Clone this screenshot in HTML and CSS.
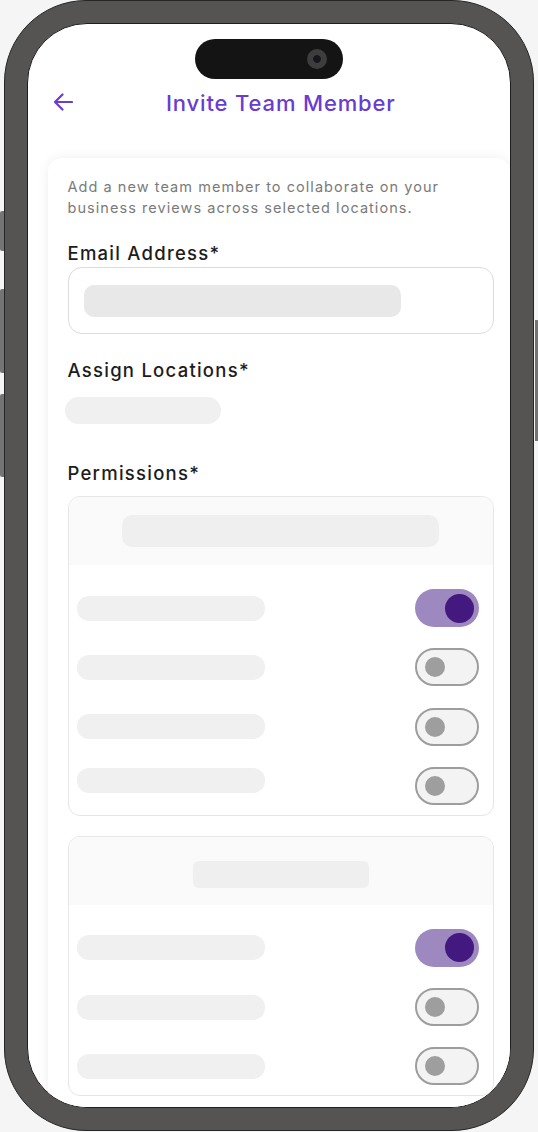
FILE: index.html
```html
<!DOCTYPE html>
<html lang="en">
<head>
<meta charset="utf-8">
<title>Invite Team Member</title>
<link rel="stylesheet" href="styles.css">
</head>
<body>
<div class="phone">
  <span class="side side-l1"></span>
  <span class="side side-l2"></span>
  <span class="side side-l3"></span>
  <span class="side side-r1"></span>
  <div class="screen">
    <div class="island"><span class="cam"></span></div>
    <header class="topbar">
      <svg class="back" viewBox="0 0 20 18" width="20" height="18" aria-hidden="true">
        <path d="M19 9H2M9.5 1.5L2 9l7.5 7.5" fill="none" stroke="#6a3cd0" stroke-width="2.2" stroke-linecap="round" stroke-linejoin="round"/>
      </svg>
      <h1 class="title">Invite Team Member</h1>
    </header>
    <main class="card">
      <p class="desc">Add a new team member to collaborate on your<br>business reviews across selected locations.</p>
      <div class="label label-email">Email Address*</div>
      <div class="input"><span class="sk sk-input"></span></div>
      <div class="label label-assign">Assign Locations*</div>
      <span class="sk sk-pill"></span>
      <div class="label label-perm">Permissions*</div>

      <section class="group">
        <div class="group-head"><span class="sk sk-head"></span></div>
        <div class="rows">
          <div class="row"><span class="sk sk-row"></span><span class="toggle on"><span class="knob"></span></span></div>
          <div class="row"><span class="sk sk-row"></span><span class="toggle"><span class="knob"></span></span></div>
          <div class="row"><span class="sk sk-row"></span><span class="toggle"><span class="knob"></span></span></div>
          <div class="row row-lift"><span class="sk sk-row"></span><span class="toggle"><span class="knob"></span></span></div>
        </div>
      </section>

      <section class="group">
        <div class="group-head"><span class="sk sk-head sk-head-short"></span></div>
        <div class="rows">
          <div class="row"><span class="sk sk-row"></span><span class="toggle on"><span class="knob"></span></span></div>
          <div class="row"><span class="sk sk-row"></span><span class="toggle"><span class="knob"></span></span></div>
          <div class="row"><span class="sk sk-row"></span><span class="toggle"><span class="knob"></span></span></div>
        </div>
      </section>
    </main>
  </div>
</div>
</body>
</html>
```

FILE: styles.css
```css
html, body {
  margin: 0;
  padding: 0;
}
body {
  background: #f5f5f5;
  font-family: "Inter", "Noto Sans", sans-serif;
  width: 538px;
  height: 1132px;
  overflow: hidden;
}
.phone {
  position: relative;
  box-sizing: border-box;
  margin-left: 4px;
  width: 530px;
  height: 1131px;
  padding: 22px;
  background: #555453;
  border: 1.5px solid #262626;
  border-radius: 82px;
}
.side {
  position: absolute;
  width: 4px;
  background: #747474;
}
.side-l1 { left: -5.5px; top: 210px; height: 40px; border-radius: 2px 0 0 2px; }
.side-l2 { left: -5.5px; top: 288px; height: 84px; border-radius: 2px 0 0 2px; }
.side-l3 { left: -5.5px; top: 393px; height: 83px; border-radius: 2px 0 0 2px; }
.side-r1 { right: -5.5px; top: 319px; height: 121px; border-radius: 0 2px 2px 0; }

.screen {
  box-sizing: border-box;
  width: 100%;
  height: 100%;
  background: #ffffff;
  border: 1.5px solid #1f1f1f;
  border-radius: 60px;
  overflow: hidden;
  display: flex;
  flex-direction: column;
}
.island {
  flex: none;
  align-self: center;
  margin-top: 15px;
  width: 148px;
  height: 40px;
  border-radius: 20px;
  background: #141414;
  display: flex;
  align-items: center;
  justify-content: flex-end;
  box-sizing: border-box;
  padding-right: 16px;
}
.cam {
  width: 20px;
  height: 20px;
  border-radius: 50%;
  background: radial-gradient(circle, #16161c 0 3.5px, #3d3d3d 4.2px);
}
.topbar {
  flex: none;
  height: 47px;
  display: flex;
  align-items: center;
  padding-left: 25px;
  gap: 93px;
}
.back {
  display: block;
  flex: none;
  margin-top: -1px;
}
.title {
  margin: 0;
  font-size: 22px;
  font-weight: 500;
  color: #6a3cd0;
  letter-spacing: 0.85px;
}
.card {
  flex: none;
  box-sizing: border-box;
  margin-top: 32px;
  margin-left: 19.5px;
  width: 462px;
  padding: 18px 20px 0 20px;
  background: #ffffff;
  border-radius: 14px;
  box-shadow: 0 0 12px rgba(0, 0, 0, 0.07);
  display: flex;
  flex-direction: column;
  align-items: flex-start;
  min-height: 1100px;
}
.desc {
  margin: 0;
  font-size: 14.5px;
  line-height: 21px;
  color: #7a7a7a;
  letter-spacing: 1.05px;
  white-space: nowrap;
}
.label {
  font-size: 18.5px;
  line-height: 24px;
  font-weight: 500;
  color: #1c1c1c;
  letter-spacing: 1.25px;
}
.label-email { margin-top: 23px; }
.label-assign { margin-top: 24px; }
.label-perm { margin-top: 37px; }

.sk {
  display: block;
  background: #f0f0f0;
}
.input {
  box-sizing: border-box;
  margin-top: 2px;
  width: 426px;
  height: 67px;
  border: 1.5px solid #dcdcdc;
  border-radius: 14px;
  padding: 16.5px 15px;
}
.sk-input {
  width: 317px;
  height: 32px;
  border-radius: 10px;
  background: #e8e8e8;
}
.sk-pill {
  margin-top: 15px;
  margin-left: -3px;
  width: 156px;
  height: 27px;
  border-radius: 14px;
}
.group {
  box-sizing: border-box;
  margin-top: 11px;
  width: 426px;
  border: 1px solid #e6e6e6;
  border-radius: 12px;
  overflow: hidden;
}
.group + .group {
  margin-top: 20px;
}
.group-head {
  height: 68px;
  background: #fafafa;
  display: flex;
  align-items: center;
  justify-content: center;
}
.sk-head {
  width: 317px;
  height: 32px;
  border-radius: 10px;
  background: #efefef;
}
.sk-head-short {
  width: 176px;
  height: 27px;
  border-radius: 6px;
  margin-top: 7px;
}
.rows {
  display: flex;
  flex-direction: column;
  gap: 21.3px;
  padding: 24px 14px 10px 8px;
}
.row {
  display: flex;
  align-items: center;
  justify-content: space-between;
}
.sk-row {
  width: 188px;
  height: 25px;
  border-radius: 12px;
}
.row-lift .sk-row {
  margin-bottom: 11px;
}
.toggle {
  box-sizing: border-box;
  width: 64px;
  height: 38px;
  border-radius: 19px;
  border: 2px solid #9d9d9d;
  background: #f3f3f3;
  display: flex;
  align-items: center;
  padding-left: 8px;
}
.toggle .knob {
  width: 20px;
  height: 20px;
  border-radius: 50%;
  background: #9e9e9e;
}
.toggle.on {
  border: none;
  background: #9d88bf;
  justify-content: flex-end;
  padding-left: 0;
  padding-right: 5px;
}
.toggle.on .knob {
  width: 29px;
  height: 29px;
  background: #43187f;
}
```
